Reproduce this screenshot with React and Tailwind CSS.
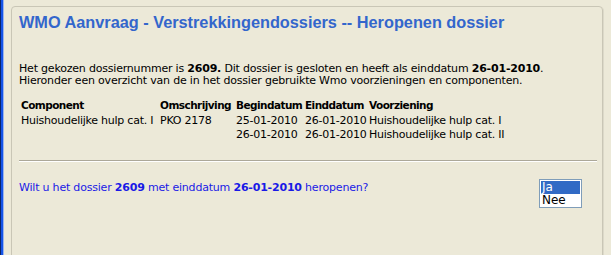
import React from "react";

const rows = [
  ["Huishoudelijke hulp cat. I", "PKO 2178", "25-01-2010", "26-01-2010", "Huishoudelijke hulp cat. I"],
  ["", "", "26-01-2010", "26-01-2010", "Huishoudelijke hulp cat. II"],
];

const App = () => {
  return (
    <div className="flex w-[611px] h-[255px] overflow-hidden bg-[#ECE9D8] font-['DejaVu_Sans',sans-serif] text-[11px] text-black">
      {/* window edge */}
      <div className="flex h-full shrink-0">
        <div className="w-[1px] bg-[#0A246A]" />
        <div className="w-[2px] bg-[#1454E8]" />
        <div className="w-[1px] bg-[#9DB4E8]" />
      </div>

      <div className="ml-[7px] mt-[6px] w-[592px] h-[300px] shrink-0 rounded-tl-[4px] rounded-tr-[4px] border border-[#C9C6B6] shadow-[1px_1px_0_#DCD9C9] pl-[7px] pt-[5px]">
        <h1 className="font-['Liberation_Sans',Arial,sans-serif] font-bold text-[16.3px] leading-[21px] text-[#3366CC]">
          WMO Aanvraag - Verstrekkingendossiers -- Heropenen dossier
        </h1>

        <p className="mt-[30px] leading-[11.5px] tracking-[-0.2px]">
          Het gekozen dossiernummer is <b>2609.</b> Dit dossier is gesloten en heeft als einddatum <b>26-01-2010</b>.
          <br />
          Hieronder een overzicht van de in het dossier gebruikte Wmo voorzieningen en componenten.
        </p>

        <div className="mt-[12px] ml-[2px] tracking-[-0.25px] leading-[14px]">
          <div className="grid grid-cols-[139px_76px_69px_64px_auto] h-[16px] text-[10.5px] font-bold tracking-[-0.55px]">
            <span>Component</span>
            <span>Omschrijving</span>
            <span>Begindatum</span>
            <span>Einddatum</span>
            <span>Voorziening</span>
          </div>
          {rows.map((r, i) => (
            <div key={i} className="grid grid-cols-[139px_76px_69px_64px_auto] h-[14px] whitespace-nowrap">
              <span>{r[0]}</span>
              <span>{r[1]}</span>
              <span>{r[2]}</span>
              <span>{r[3]}</span>
              <span>{r[4]}</span>
            </div>
          ))}
        </div>

        <div className="mt-[18px] mr-[5px] h-[2px] border-t border-[#ACA899] border-b border-b-white" />

        <div className="mt-[19px] flex items-start justify-between pr-[20px]">
          <p className="text-[#1A1AE6] tracking-[-0.2px] leading-[13px]">
            Wilt u het dossier <b>2609</b> met einddatum <b>26-01-2010</b> heropenen?
          </p>
          <div className="-mt-[2px] w-[43px] h-[29px] border border-[#7F9DB9] bg-white p-[1px] text-[12px] leading-[13px]">
            <div className="bg-[#316AC5] pl-[1px] text-white">Ja</div>
            <div className="pl-[1px]">Nee</div>
          </div>
        </div>
      </div>
    </div>
  );
};

export default App;
